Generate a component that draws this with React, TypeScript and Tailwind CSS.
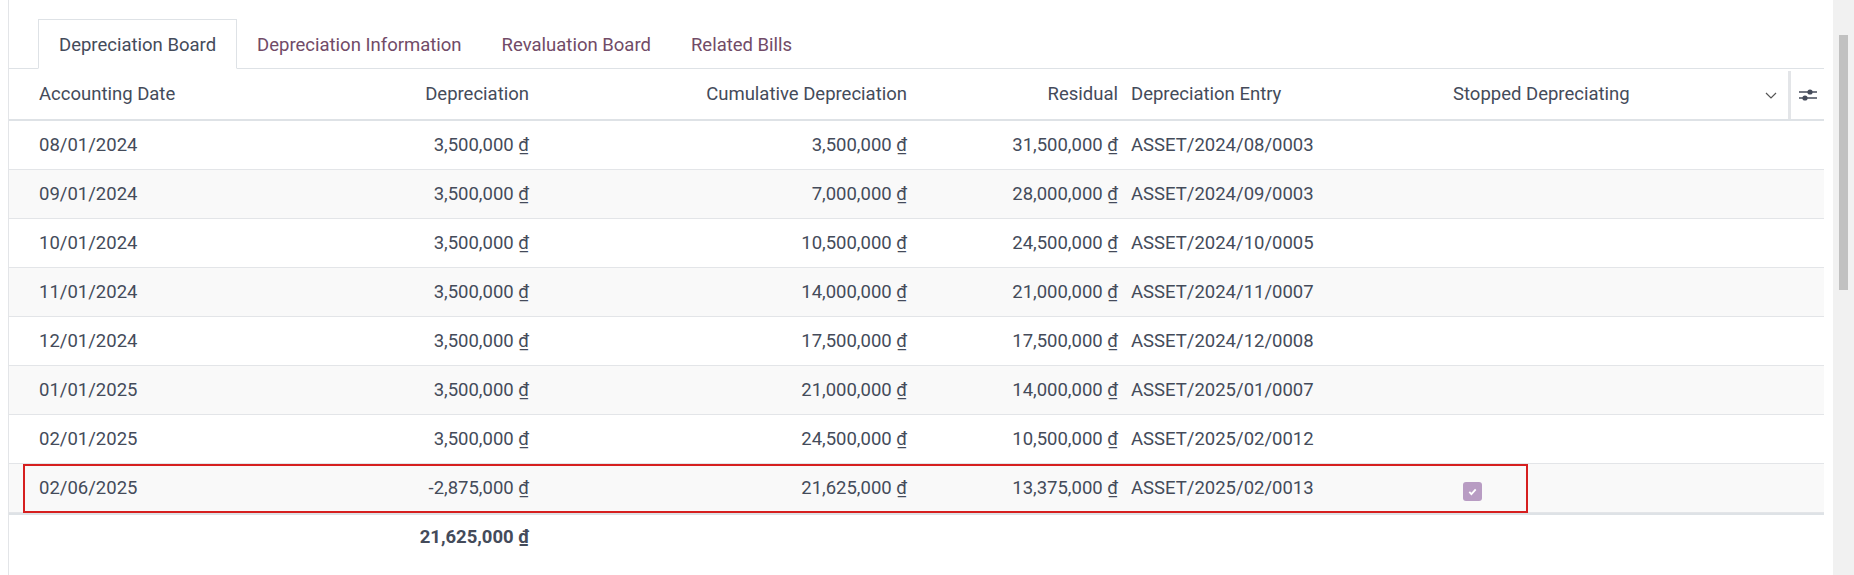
import React from "react";

const rows = [
  ["08/01/2024", "3,500,000", "3,500,000", "31,500,000", "ASSET/2024/08/0003"],
  ["09/01/2024", "3,500,000", "7,000,000", "28,000,000", "ASSET/2024/09/0003"],
  ["10/01/2024", "3,500,000", "10,500,000", "24,500,000", "ASSET/2024/10/0005"],
  ["11/01/2024", "3,500,000", "14,000,000", "21,000,000", "ASSET/2024/11/0007"],
  ["12/01/2024", "3,500,000", "17,500,000", "17,500,000", "ASSET/2024/12/0008"],
  ["01/01/2025", "3,500,000", "21,000,000", "14,000,000", "ASSET/2025/01/0007"],
  ["02/01/2025", "3,500,000", "24,500,000", "10,500,000", "ASSET/2025/02/0012"],
  ["02/06/2025", "-2,875,000", "21,625,000", "13,375,000", "ASSET/2025/02/0013"],
];

function Row({ r, i }: { r: string[]; i: number }) {
  const last = i === rows.length - 1;
  return (
    <div className={`relative flex h-[49px] items-center border-b border-[#e3e5e8] pt-[2px] ${i % 2 === 1 ? "bg-[#f9f9f9]" : "bg-white"}`}>
      {last && <div className="absolute left-[14px] top-[0px] h-[49px] w-[1505px] border-2 border-[#d61f1f]" />}
      <div className="w-[292px] pl-[30px]">{r[0]}</div>
      <div className="w-[238px] text-right pr-[10px]">{r[1]} ₫</div>
      <div className="w-[378px] text-right pr-[10px]">{r[2]} ₫</div>
      <div className="w-[211px] text-right pr-[10px]">{r[3]} ₫</div>
      <div className="w-[325px] pl-[3px]">{r[4]}</div>
      <div className="w-[338px]">
        {last && (
          <div className="ml-[10px] mt-[4px] flex h-[19px] w-[19px] items-center justify-center rounded-[3px] bg-[#b89cc3]">
            <svg width="11" height="11" viewBox="0 0 12 12"><path d="M2.5 6.5l2.3 2.3 4.7-5" stroke="white" strokeWidth="2" fill="none" /></svg>
          </div>
        )}
      </div>
    </div>
  );
}

export default function App() {
  return (
    <div className="flex h-[575px] w-[1854px] bg-white text-[18.5px] text-[#444b5a]" style={{ fontFamily: "Roboto, 'Liberation Sans', sans-serif" }}>
      <div className="ml-[8px] w-[1816px] border-l border-[#e3e5e8]">
        <div className="h-[19px]" />
        <div className="flex h-[50px] items-stretch border-b border-[#dee2e6] pl-[29px]">
          <div className="-mb-px flex items-center border border-b-white border-[#dee2e6] bg-white px-[20px] pt-[4px] text-[#444b5a]">Depreciation Board</div>
          <div className="flex items-center px-[20px] pt-[4px] text-[#714b67]">Depreciation Information</div>
          <div className="flex items-center px-[20px] pt-[4px] text-[#714b67]">Revaluation Board</div>
          <div className="flex items-center px-[20px] pt-[4px] text-[#714b67]">Related Bills</div>
        </div>
        <div className="flex h-[52px] items-center border-b-2 border-[#dee2e6] pt-[2px]">
          <div className="w-[292px] pl-[30px]">Accounting Date</div>
          <div className="w-[238px] text-right pr-[10px]">Depreciation</div>
          <div className="w-[378px] text-right pr-[10px]">Cumulative Depreciation</div>
          <div className="w-[211px] text-right pr-[10px]">Residual</div>
          <div className="w-[325px] pl-[3px]">Depreciation Entry</div>
          <div className="flex h-full w-[338px] items-center justify-between border-r-[3px] border-[#e3e5e8] pr-[10px]">
            <span>Stopped Depreciating</span>
            <svg width="14" height="14" viewBox="0 0 14 14"><path d="M2 5l5 5 5-5" stroke="#555" strokeWidth="1.2" fill="none" /></svg>
          </div>
          <div className="flex flex-1 items-center justify-center">
            <svg width="20" height="18" viewBox="0 0 20 18">
              <path d="M1 6h18M1 12h18" stroke="#444b5a" strokeWidth="1.6" />
              <circle cx="12" cy="6" r="2.6" fill="#444b5a" />
              <circle cx="7" cy="12" r="2.6" fill="#444b5a" />
            </svg>
          </div>
        </div>
        {rows.map((r, i) => <Row key={i} r={r} i={i} />)}
        <div className="flex h-[47px] items-center border-t-2 border-[#dee2e6] font-bold">
          <div className="w-[292px]" />
          <div className="w-[238px] text-right pr-[10px]">21,625,000 ₫</div>
        </div>
      </div>
      <div className="ml-[9px] w-[21px] bg-[#f1f1f1] pt-[35px]">
        <div className="mx-auto h-[255px] w-[9px] bg-[#c1c1c1]" />
      </div>
    </div>
  );
}
